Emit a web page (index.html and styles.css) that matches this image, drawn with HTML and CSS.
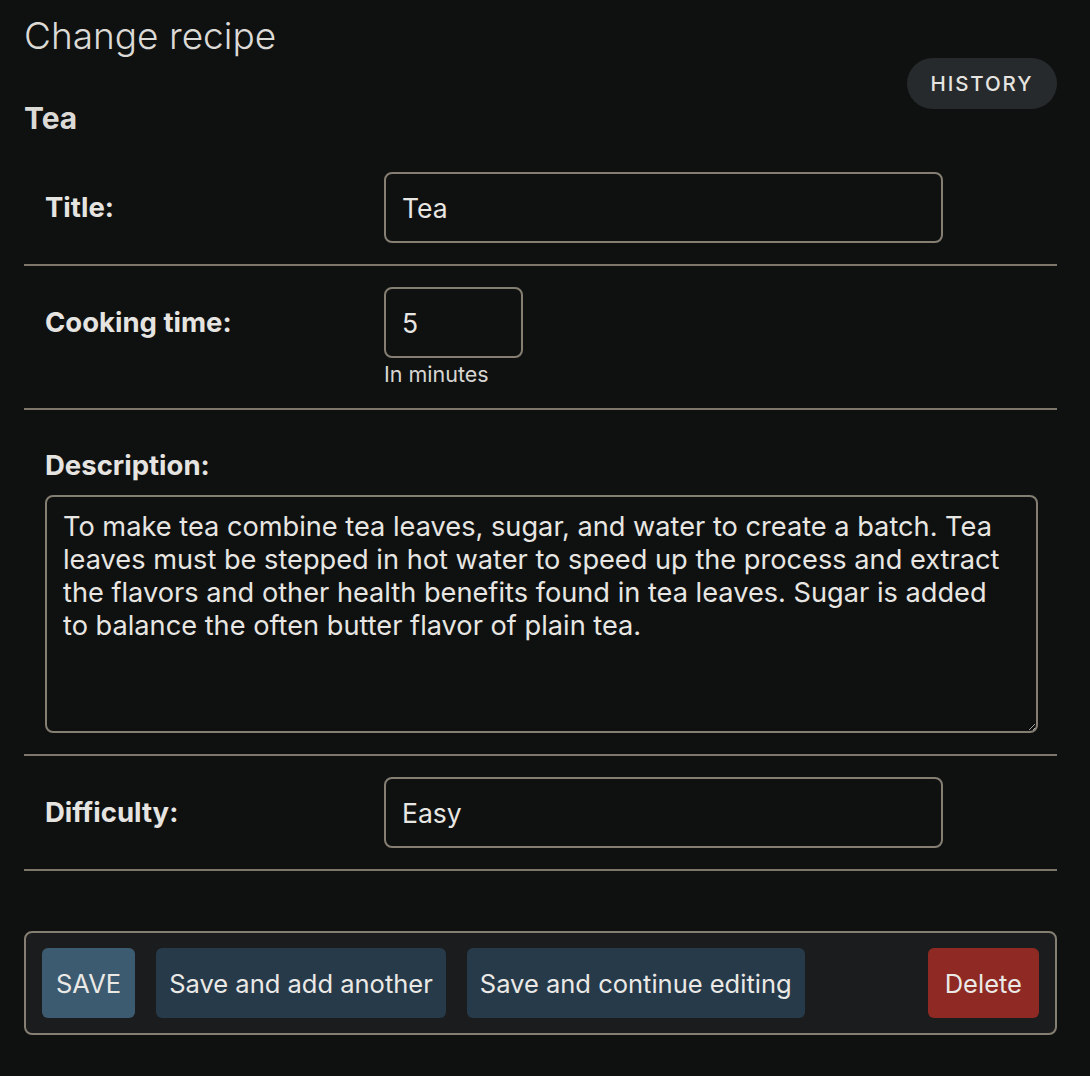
FILE: index.html
```html
<!DOCTYPE html>
<html lang="en">
<head>
<meta charset="utf-8">
<title>Change recipe</title>
<link rel="stylesheet" href="styles.css">
</head>
<body>
<div class="content">
  <h1 class="page-title">Change recipe</h1>
  <div class="head-row">
    <h2 class="object-title">Tea</h2>
    <a class="history-link" href="#">History</a>
  </div>
  <form class="change-form">
    <div class="form-row">
      <label class="field-label" for="id_title">Title:</label>
      <div class="field-box">
        <input class="text-input wide" id="id_title" type="text" value="Tea">
      </div>
    </div>
    <div class="form-row">
      <label class="field-label" for="id_time">Cooking time:</label>
      <div class="field-box">
        <input class="text-input narrow" id="id_time" type="text" value="5">
        <div class="help">In minutes</div>
      </div>
    </div>
    <div class="form-row stacked">
      <label class="field-label stacked-label" for="id_desc">Description:</label>
      <textarea class="text-area" id="id_desc">To make tea combine tea leaves, sugar, and water to create a batch. Tea leaves must be stepped in hot water to speed up the process and extract the flavors and other health benefits found in tea leaves. Sugar is added to balance the often butter flavor of plain tea.</textarea>
    </div>
    <div class="form-row">
      <label class="field-label" for="id_diff">Difficulty:</label>
      <div class="field-box">
        <input class="text-input wide" id="id_diff" type="text" value="Easy">
      </div>
    </div>
    <div class="submit-row">
      <button type="button" class="btn btn-default">SAVE</button>
      <button type="button" class="btn btn-secondary">Save and add another</button>
      <button type="button" class="btn btn-secondary">Save and continue editing</button>
      <span class="spacer"></span>
      <button type="button" class="btn btn-delete">Delete</button>
    </div>
  </form>
</div>
</body>
</html>
```

FILE: styles.css
```css
html, body {
  margin: 0;
  padding: 0;
  background: #0f1111;
  color: #e4e2df;
  font-family: Inter, "Noto Sans", "Liberation Sans", sans-serif;
  color-scheme: dark;
}

.content {
  width: 1033px;
  margin-left: 24px;
  padding-top: 14px;
}

.page-title {
  margin: 0;
  font-size: 37px;
  line-height: 44px;
  font-weight: 300;
  color: #dcdad6;
}

.head-row {
  display: flex;
  justify-content: space-between;
  align-items: flex-start;
}

.object-title {
  margin: 46px 0 19px 0;
  font-size: 30px;
  line-height: 28px;
  font-weight: 700;
  color: #dcdad6;
}

.history-link {
  display: flex;
  align-items: center;
  justify-content: center;
  width: 150px;
  height: 51px;
  border-radius: 26px;
  background: #262a2c;
  color: #e6e4e0;
  font-size: 20.5px;
  font-weight: 500;
  letter-spacing: 1.9px;
  text-transform: uppercase;
  text-decoration: none;
}

.form-row {
  display: flex;
  align-items: flex-start;
  padding: 21px 20px 21px 21px;
  border-bottom: 2px solid #7d766b;
}

.form-row.stacked {
  flex-direction: column;
}

.field-label {
  width: 339px;
  flex: none;
  font-size: 27.5px;
  line-height: 71px;
  font-weight: 700;
  color: #e6e4e1;
}

.stacked-label {
  line-height: 30px;
  margin-top: 19px;
  margin-bottom: 15px;
}

.field-box {
  display: flex;
  flex-direction: column;
}

.text-input {
  box-sizing: border-box;
  height: 71px;
  border: 2px solid #857e72;
  border-radius: 8px;
  background: #0f1111;
  color: #e8e6e2;
  font-family: inherit;
  font-size: 26.5px;
  padding: 0 16px;
  outline: none;
}

.text-input.wide { width: 559px; }
.text-input.narrow { width: 139px; }

.help {
  margin-top: 4px;
  font-size: 21.5px;
  line-height: 25px;
  color: #d8d6d2;
}

.text-area {
  box-sizing: border-box;
  width: 993px;
  height: 238px;
  border: 2px solid #857e72;
  border-radius: 8px;
  background: #0f1111;
  color: #e8e6e2;
  font-family: inherit;
  font-size: 27.2px;
  line-height: 33px;
  padding: 13px 30px 13px 16px;
  resize: both;
  outline: none;
}

.submit-row {
  display: flex;
  align-items: center;
  gap: 21px;
  margin-top: 60px;
  padding: 15px 16px 15px 16px;
  border: 2px solid #857e72;
  border-radius: 8px;
  background: #1b1c1d;
}

.spacer { flex: 1; }

.btn {
  height: 70px;
  border: none;
  border-radius: 6px;
  padding: 0 14px;
  font-family: inherit;
  font-size: 25.5px;
  color: #ebe9e6;
}

.btn-default { background: #3d5b70; }
.btn-secondary { background: #263a4a; padding: 0 13px; }
.btn-delete { background: #8e2a23; padding: 0 17px; }
```
